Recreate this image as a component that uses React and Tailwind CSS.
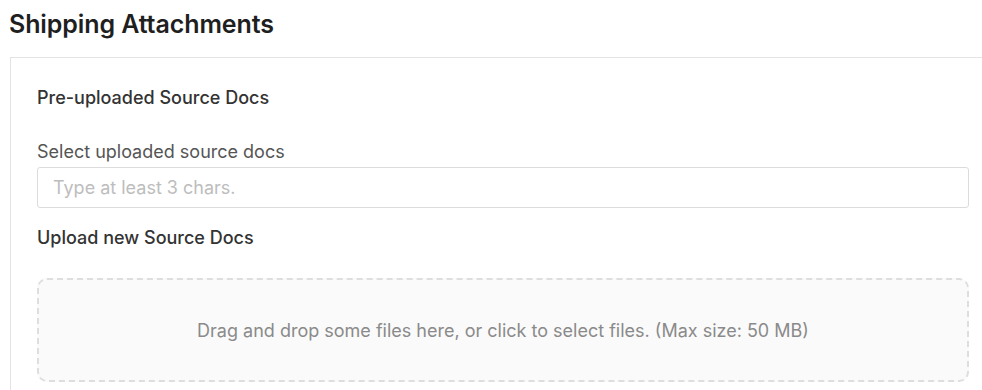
export default function App() {
  return (
    <div className="w-[982px] h-[390px] overflow-hidden bg-white" style={{ fontFamily: 'Inter, "Liberation Sans", sans-serif' }}>
      <h1 className="ml-[9px] mt-[10px] h-[28px] text-[25px] leading-[28px] font-semibold text-[#1f1f1f] tracking-[-0.1px]">
        Shipping Attachments
      </h1>
      <div className="mt-[19px] ml-[10px] w-[988px] border border-[#e3e3e3] px-[26px] pt-[28px] pb-[30px]">
        <div className="h-[24px] text-[18px] leading-[24px] font-medium text-[#333]">Pre-uploaded Source Docs</div>
        <div className="mt-[30px] h-[24px] text-[18px] leading-[24px] text-[#555]">Select uploaded source docs</div>
        <div className="mt-[3px] h-[41px] w-[932px] border border-[#dcdcdc] rounded-[3px] flex items-center pl-[15px] text-[18px] text-[#bdbdbd]">
          Type at least 3 chars.
        </div>
        <div className="mt-[18px] h-[24px] text-[18px] leading-[24px] font-medium text-[#333]">Upload new Source Docs</div>
        <div className="mt-[28px] h-[104px] w-[932px] border-2 border-dashed border-[#dedede] rounded-[10px] bg-[#fafafa] flex items-center justify-center text-[18px] text-[#8a8a8a]">
          Drag and drop some files here, or click to select files. (Max size: 50 MB)
        </div>
      </div>
    </div>
  );
}
